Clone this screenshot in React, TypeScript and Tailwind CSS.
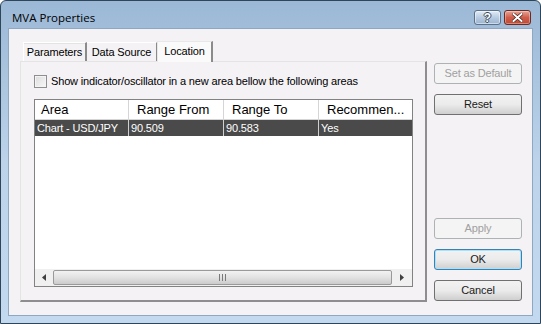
import React from "react";

const F = { fontFamily: '"Liberation Sans", Arial, sans-serif' };

function Btn({ label, disabled, focused }: { label: string; disabled?: boolean; focused?: boolean }) {
  return (
    <div
      className={
        "h-[21px] w-[88px] rounded-[3px] border flex items-center justify-center text-[11px] " +
        (disabled
          ? "border-[#adb2b5] bg-[#f4f4f4] text-[#a0a0a0]"
          : focused
          ? "border-[#3c7fb1] bg-gradient-to-b from-[#f2f2f2] via-[#ebebeb] to-[#cfcfcf] text-[#1a1a1a] shadow-[inset_0_0_0_1px_#a6e2f8]"
          : "border-[#707070] bg-gradient-to-b from-[#f2f2f2] via-[#ebebeb] to-[#cfcfcf] text-[#1a1a1a]")
      }
    >
      {label}
    </div>
  );
}

export default function App() {
  return (
    <div className="w-[541px] h-[324px] overflow-hidden" style={F}>
      <div className="w-[541px] h-[324px] rounded-t-[6px] border border-[#2f4659] bg-gradient-to-b from-[#9bb8d6] via-[#bcd3ea] to-[#c3d9ef] flex flex-col">
        {/* title bar */}
        <div className="h-[27px] flex items-start pl-[11px] pr-[9px] shrink-0">
          <div className="text-[11.5px] text-black flex-1 pt-[8px]" style={{ fontFamily: '"Open Sans", "Liberation Sans", sans-serif' }}>
            MVA Properties
          </div>
          <div className="flex gap-[3px] mt-[9px]">
            <div className="w-[27px] h-[15px] rounded-[3px] border border-[#5c7088] bg-gradient-to-b from-[#e2ecf6] via-[#b8cce2] to-[#99b3cf] flex items-center justify-center shadow-[inset_0_0_0_1px_rgba(255,255,255,0.5)]">
              <span className="text-[12px] font-bold text-white leading-none" style={{ textShadow: "1px 0 0 #3a4a5a, -1px 0 0 #3a4a5a, 0 1px 0 #3a4a5a, 0 -1px 0 #3a4a5a" }}>?</span>
            </div>
            <div className="w-[27px] h-[15px] rounded-[3px] border border-[#6b2a22] bg-gradient-to-b from-[#e5a597] via-[#cf5d4a] to-[#c04a33] flex items-center justify-center shadow-[inset_0_0_0_1px_rgba(255,255,255,0.35)]">
              <svg width="11" height="9" viewBox="0 0 11 9">
                <path d="M1.5 1 L9.5 8 M9.5 1 L1.5 8" stroke="#3a1a14" strokeWidth="3.2" strokeLinecap="square" />
                <path d="M1.5 1 L9.5 8 M9.5 1 L1.5 8" stroke="#ffffff" strokeWidth="2" strokeLinecap="square" />
              </svg>
            </div>
          </div>
        </div>
        {/* client */}
        <div className="mx-[7px] h-[288px] bg-[#f5f2f5] border border-[#8ea8c4] flex text-[11px] tracking-[-0.15px] text-black">
          {/* tab control */}
          <div className="ml-[11px] mt-[11px] w-[407px] flex flex-col">
            <div className="flex items-end h-[21px] pl-[3px]">
              <div className="h-[19px] w-[64px] justify-center flex items-center border-t border-l border-[#ffffff] border-r-2 border-r-[#8b8b8b] bg-[#f5f2f5] shadow-[inset_0_1px_0_#e3e3e3]">Parameters</div>
              <div className="h-[19px] w-[70px] justify-center flex items-center border-t border-[#ffffff] border-r border-r-[#8b8b8b] bg-[#f5f2f5]">Data Source</div>
              <div className="h-[21px] w-[56px] justify-center flex items-center border-t border-l border-[#e8e8e8] border-r-2 border-r-[#8b8b8b] bg-[#fbfafb] -mb-[1px] relative z-10 pb-[2px]">Location</div>
            </div>
            <div className="h-[241px] border-t border-l border-[#e4e4e4] border-r-2 border-b-2 border-r-[#8e8e8e] border-b-[#8e8e8e] bg-[#f5f2f5] flex flex-col pl-[13px] pr-[12px]">
              <div className="flex items-center mt-[12px] h-[14px]">
                <div className="w-[13px] h-[13px] border border-[#8f8f8f] bg-gradient-to-br from-[#dcdcdc] to-[#f8f8f8] shadow-[inset_0_0_0_1px_#f4f4f4]" />
                <span className="ml-[4px]">Show indicator/oscillator in a new area bellow the following areas</span>
              </div>
              <div className="mt-[11px] h-[188px] border border-[#828282] bg-white flex flex-col">
                <div className="flex h-[20px] text-[13px] tracking-normal border-b border-[#d5d5d5]">
                  <div className="w-[94px] border-r border-[#d5d5d5] pl-[6px] flex items-center">Area</div>
                  <div className="w-[95px] border-r border-[#d5d5d5] pl-[8px] flex items-center">Range From</div>
                  <div className="w-[95px] border-r border-[#d5d5d5] pl-[8px] flex items-center">Range To</div>
                  <div className="w-[93px] pl-[8px] flex items-center">Recommen...</div>
                </div>
                <div className="flex h-[16px] bg-[#4a4a4a] text-white">
                  <div className="w-[94px] border-r border-[#d0d0d0] pl-[2px] flex items-center">Chart - USD/JPY</div>
                  <div className="w-[95px] border-r border-[#d0d0d0] pl-[2px] flex items-center">90.509</div>
                  <div className="w-[95px] border-r border-[#d0d0d0] pl-[2px] flex items-center">90.583</div>
                  <div className="w-[93px] pl-[2px] flex items-center">Yes</div>
                </div>
                <div className="flex-1" />
                <div className="h-[17px] flex items-center bg-[#f0f0f0]">
                  <div className="w-[18px] h-full flex items-center justify-center">
                    <svg width="4" height="7" viewBox="0 0 4 7"><path d="M4 0 L0 3.5 L4 7 Z" fill="#404040" /></svg>
                  </div>
                  <div className="flex-1 h-[15px] rounded-[2px] border border-[#9a9a9a] bg-gradient-to-b from-[#f2f2f2] via-[#e2e2e2] to-[#cbcbcb] flex items-center justify-center">
                    <svg width="7" height="7" viewBox="0 0 7 7">
                      <path d="M0.5 0 V7 M3.5 0 V7 M6.5 0 V7" stroke="#7a7a7a" strokeWidth="1" />
                    </svg>
                  </div>
                  <div className="w-[20px] h-full flex items-center justify-center">
                    <svg width="4" height="7" viewBox="0 0 4 7"><path d="M0 0 L4 3.5 L0 7 Z" fill="#404040" /></svg>
                  </div>
                </div>
              </div>
            </div>
          </div>
          {/* buttons */}
          <div className="ml-[7px] mt-[34px] flex flex-col">
            <Btn label="Set as Default" disabled />
            <div className="h-[10px]" />
            <Btn label="Reset" />
            <div className="h-[103px]" />
            <Btn label="Apply" disabled />
            <div className="h-[10px]" />
            <Btn label="OK" focused />
            <div className="h-[10px]" />
            <Btn label="Cancel" />
          </div>
        </div>
      </div>
    </div>
  );
}
